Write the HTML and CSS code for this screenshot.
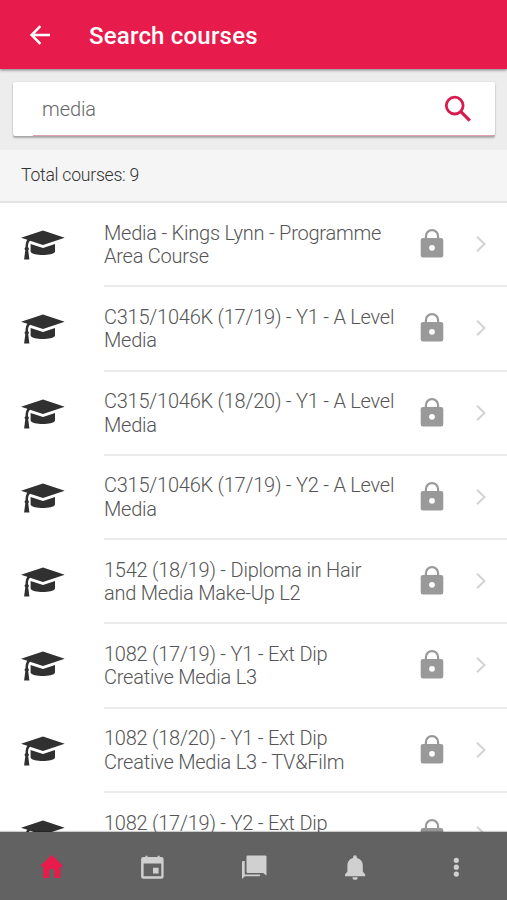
FILE: index.html
```html
<!DOCTYPE html>
<html lang="en">
<head>
<meta charset="utf-8">
<title>Search courses</title>
<link rel="stylesheet" href="styles.css">
</head>
<body>
<svg class="defs" width="0" height="0" aria-hidden="true">
  <symbol id="cap" viewBox="0 0 44 30">
    <path d="M22 0.500 43.700 7.700 22 14.900 9 10.800C7.300 12 7 14.500 7 17.200c1.200.8 1.200 2.200.2 3L8.400 29.500H3.100L4.300 20.200c-1-.8-1-2.200.2-3C4.500 14 5 11.400 6.300 9.700L0 7.700Z"/>
    <path d="M9.600 14 22 17.900 34 14V21.800C32 26.200 11.500 26.200 9.600 21.800Z"/>
  </symbol>
  <symbol id="lock" viewBox="0 0 24 30">
    <path fill-rule="evenodd" d="M3 10H4.800V8.200a7.200 7.200 0 0 1 14.400 0V10H21a2.300 2.300 0 0 1 2.300 2.300v15A2.300 2.300 0 0 1 21 29.600H3A2.300 2.300 0 0 1 .7 27.300v-15A2.300 2.300 0 0 1 3 10ZM7 10H17V8.200a5 5 0 0 0-10 0ZM12 16.900a2.900 2.900 0 1 0 0 5.800a2.900 2.900 0 1 0 0-5.800Z"/>
  </symbol>
  <symbol id="chevron" viewBox="0 0 12 18">
    <path d="M2 1.700 9.500 9 2 16.300" fill="none" stroke="currentColor" stroke-width="2"/>
  </symbol>
</svg>
<div class="app">
  <header class="header">
    <svg class="back" viewBox="0 0 22 20"><path d="M21 10H2.500M11.400 1.200 2.600 10l8.800 8.800" fill="none" stroke="currentColor" stroke-width="2.500"/></svg>
    <h1 class="title">Search courses</h1>
  </header>
  <div class="search">
    <div class="search-box">
      <span class="query">media</span>
      <svg class="magnifier" viewBox="0 0 28 28"><circle cx="10.700" cy="10.600" r="8.400" fill="none" stroke="currentColor" stroke-width="2.800"/><path d="m16.800 16.700 9 9" fill="none" stroke="currentColor" stroke-width="3.200"/></svg>
    </div>
  </div>
  <div class="total">Total courses: 9</div>
  <main class="list">
    <div class="row"><svg class="cap"><use href="#cap"/></svg><div class="item"><p class="name">Media - Kings Lynn - Programme<br>Area Course</p><svg class="lock"><use href="#lock"/></svg><svg class="chevron"><use href="#chevron"/></svg></div></div>
    <div class="row"><svg class="cap"><use href="#cap"/></svg><div class="item"><p class="name">C315/1046K (17/19) - Y1 - A Level<br>Media</p><svg class="lock"><use href="#lock"/></svg><svg class="chevron"><use href="#chevron"/></svg></div></div>
    <div class="row"><svg class="cap"><use href="#cap"/></svg><div class="item"><p class="name">C315/1046K (18/20) - Y1 - A Level<br>Media</p><svg class="lock"><use href="#lock"/></svg><svg class="chevron"><use href="#chevron"/></svg></div></div>
    <div class="row"><svg class="cap"><use href="#cap"/></svg><div class="item"><p class="name">C315/1046K (17/19) - Y2 - A Level<br>Media</p><svg class="lock"><use href="#lock"/></svg><svg class="chevron"><use href="#chevron"/></svg></div></div>
    <div class="row"><svg class="cap"><use href="#cap"/></svg><div class="item"><p class="name">1542 (18/19) - Diploma in Hair<br>and Media Make-Up L2</p><svg class="lock"><use href="#lock"/></svg><svg class="chevron"><use href="#chevron"/></svg></div></div>
    <div class="row"><svg class="cap"><use href="#cap"/></svg><div class="item"><p class="name">1082 (17/19) - Y1 - Ext Dip<br>Creative Media L3</p><svg class="lock"><use href="#lock"/></svg><svg class="chevron"><use href="#chevron"/></svg></div></div>
    <div class="row"><svg class="cap"><use href="#cap"/></svg><div class="item"><p class="name">1082 (18/20) - Y1 - Ext Dip<br>Creative Media L3 - TV&amp;Film</p><svg class="lock"><use href="#lock"/></svg><svg class="chevron"><use href="#chevron"/></svg></div></div>
    <div class="row"><svg class="cap"><use href="#cap"/></svg><div class="item"><p class="name">1082 (17/19) - Y2 - Ext Dip</p><svg class="lock"><use href="#lock"/></svg><svg class="chevron"><use href="#chevron"/></svg></div></div>
  </main>
  <nav class="tabs">
    <div class="tab active"><svg viewBox="0 0 28 28"><path d="M14.800 1.800 25.700 12.600l-1 1.300H23.400V25H17.400V18.300a2.500 2.500 0 0 0-5 0V25H6.400V13.900H4.900L3.700 12.600Z"/></svg></div>
    <div class="tab"><svg viewBox="0 0 28 28"><path transform="translate(.8)" fill-rule="evenodd" d="M6.500 4H6.700V2.800H8.700V4H18.900V2.800H20.900V4H22.500A2.300 2.300 0 0 1 24.800 6.300V23.200A2.500 2.500 0 0 1 22.300 25.700H4.800A2.500 2.500 0 0 1 2.300 23.200V6.300A2.300 2.300 0 0 1 4.600 4ZM4.800 10.500V23.300H22.500V10.500ZM14.200 14.800H19.800V20.500H14.200Z"/></svg></div>
    <div class="tab"><svg viewBox="0 0 28 28"><path d="M7.700 2.500H25.300A1.200 1.200 0 0 1 26.500 3.700V22.600L23 19.900H7.700A1.200 1.200 0 0 1 6.500 18.700V3.700A1.200 1.200 0 0 1 7.700 2.500Z"/><path d="M2 9.200A1.300 1.300 0 0 1 3.300 7.900H4.700V21.500H20.200V22A1.300 1.300 0 0 1 18.900 23.300H4.800L2 26Z"/></svg></div>
    <div class="tab"><svg viewBox="0 0 28 28"><path d="M14 2.300a1.900 1.900 0 0 0-1.900 1.900v.8C8.400 5.900 6.400 9 6.400 12.500V18.500L4 21.600V23.300H24.200V21.600L21.800 18.500V12.500C21.800 9 19.600 5.900 15.900 5V4.200A1.900 1.900 0 0 0 14 2.300ZM11.500 24.200A2.600 2.600 0 0 0 16.700 24.200Z"/></svg></div>
    <div class="tab"><svg viewBox="0 0 28 28"><circle cx="14.300" cy="7.300" r="2.600"/><circle cx="14.300" cy="14.200" r="2.600"/><circle cx="14.300" cy="21.100" r="2.600"/></svg></div>
  </nav>
</div>
</body>
</html>
```
FILE: styles.css
```css
* { box-sizing: border-box; }
body {
  margin: 0;
  font-family: Roboto, "Liberation Sans", sans-serif;
  font-weight: 300;
  background: #fff;
}
svg { display: block; flex: none; fill: currentColor; }
.defs { position: absolute; }
.app {
  height: 900px;
  display: flex;
  flex-direction: column;
  overflow: hidden;
}
.header {
  height: 69px;
  flex: none;
  display: flex;
  align-items: center;
  padding: 1px 0 0 29px;
  color: #fff;
  background: #e71c4c;
  box-shadow: 0 1px 3px rgba(0, 0, 0, .5);
  z-index: 1;
}
.back { width: 22px; height: 20px; }
.title {
  margin: 1px 0 0 38px;
  font-size: 24px;
  line-height: 30px;
  font-weight: 500;
  letter-spacing: .2px;
}
.search {
  flex: none;
  height: 81px;
  padding: 13px 12px 0 13px;
  background: #ededed;
}
.search-box {
  height: 54px;
  display: flex;
  align-items: center;
  justify-content: space-between;
  padding: 0 23px 0 29px;
  border-radius: 2px;
  color: #666;
  background: linear-gradient(#e0a0b0, #e0a0b0) right bottom / 462px 1px no-repeat #fff;
  box-shadow: 0 2px 2px rgba(0, 0, 0, .28), 0 0 2px rgba(0, 0, 0, .12);
}
.query { font-size: 20px; line-height: 24px; letter-spacing: -.1px; }
.magnifier { width: 28px; height: 28px; color: #d81b4c; }
.total {
  flex: none;
  height: 53px;
  padding: 0 21px;
  font-size: 17.600px;
  letter-spacing: -.25px;
  line-height: 50px;
  color: #333;
  background: #f5f5f5;
  border-bottom: 2px solid #e4e4e4;
}
.list {
  flex: 1;
  min-height: 0;
  overflow: hidden;
}
.row {
  height: 84.3px;
  display: flex;
  padding-left: 21px;
}
.cap { width: 44px; height: 30px; margin: 27px 39px 0 0; color: #303030; }
.item {
  flex: 1;
  display: flex;
  border-bottom: 2px solid #ebebeb;
}
.name {
  width: 316px;
  margin: 18.500px 0 0;
  font-size: 20px;
  letter-spacing: -.23px;
  line-height: 23.4px;
  color: #555;
  white-space: nowrap;
}
.lock { width: 24px; height: 30px; margin-top: 25px; color: #999; }
.chevron { width: 12px; height: 18px; margin: 32px 0 0 31px; color: #d3d3d3; }
.tabs {
  flex: none;
  height: 68.500px;
  display: flex;
  color: #d0d0d0;
  background: #626262;
  box-shadow: 0 -1px 1px rgba(0, 0, 0, .2);
  z-index: 1;
}
.tab { flex: 1; display: flex; justify-content: center; padding-top: 21.500px; }
.tab svg { width: 28px; height: 28px; }
.active { color: #e71c4c; }
```
